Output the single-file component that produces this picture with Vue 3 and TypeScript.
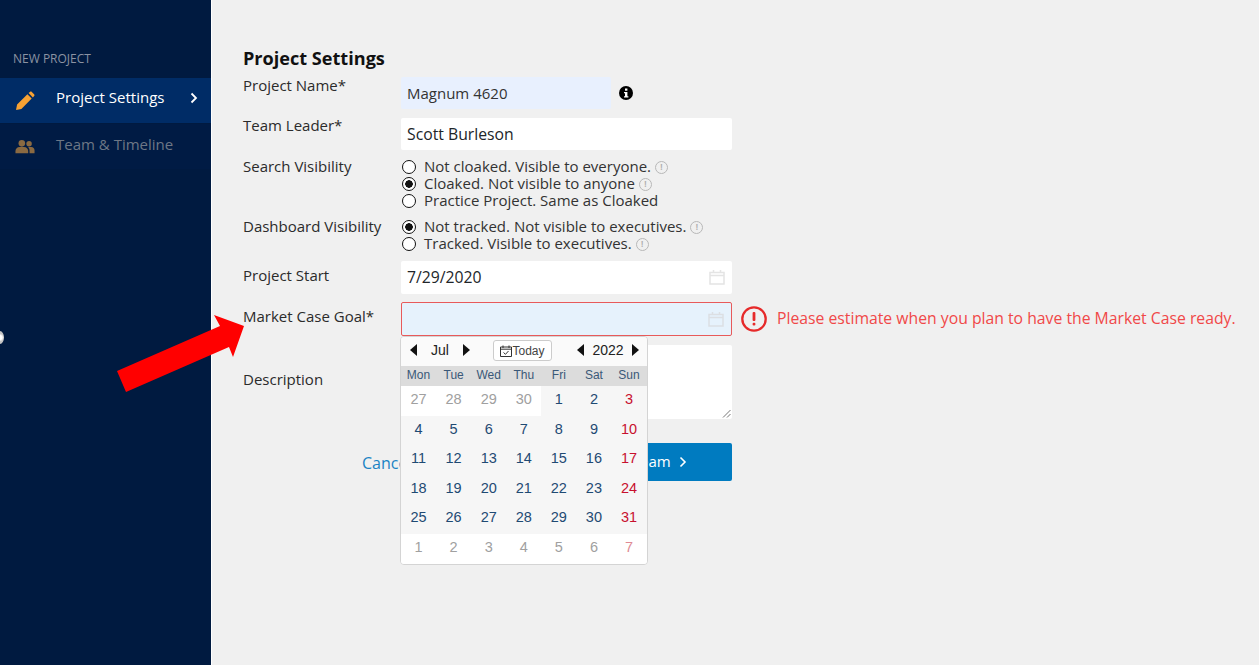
<script setup lang="ts">
const header = ['Mon', 'Tue', 'Wed', 'Thu', 'Fri', 'Sat', 'Sun']
interface Day { n: number; off: boolean }
const days: Day[] = []
for (const n of [27, 28, 29, 30]) days.push({ n, off: true })
for (let n = 1; n <= 31; n++) days.push({ n, off: false })
for (let n = 1; n <= 7; n++) days.push({ n, off: true })
const weeks: Day[][] = []
for (let i = 0; i < days.length; i += 7) weeks.push(days.slice(i, i + 7))
</script>

<template>
  <div class="page">
    <aside class="side">
      <div class="side-title">NEW PROJECT</div>
      <div class="nav active">
        <svg class="nav-ic" viewBox="0 0 20 20" width="20" height="20"><path fill="#f7a233" d="M1 19l1.100-5.400L12.400 3.300l4.300 4.300L6.400 17.900zM13.600 2.100l1.300-1.200c.6-.5 1.400-.5 1.900 0l2.300 2.300c.5.5.5 1.300 0 1.900l-1.200 1.300z"/></svg>
        <span class="nav-text">Project Settings</span>
        <svg class="nav-chev" viewBox="0 0 8 12" width="8" height="12"><path d="M1.500 1.500L6 6l-4.500 4.500" fill="none" stroke="#fff" stroke-width="1.800"/></svg>
      </div>
      <div class="nav second">
        <svg class="nav-ic" viewBox="0 0 22 16" width="22" height="16"><g fill="#8a6a42"><circle cx="7.500" cy="4" r="3.600"/><circle cx="15.500" cy="4.500" r="3"/><path d="M0.500 15v-2.500c0-2.500 2-4.500 4.500-4.500h5c2.500 0 4.500 2 4.500 4.500V15z"/><path d="M16 15v-3c0-1.500-.5-2.700-1.500-3.600.4-.2.900-.4 1.500-.4h2c2 0 3.500 1.500 3.500 3.500V15z"/></g></svg>
        <span class="nav-text dim">Team &amp; Timeline</span>
      </div>
    </aside>
    <main class="main">
      <h1 class="title">Project Settings</h1>
      <div class="row name-row">
        <label class="lab">Project Name*</label>
        <div class="input auto">Magnum 4620</div>
        <svg class="info" viewBox="0 0 14 14" width="14" height="14"><circle cx="7" cy="7" r="7" fill="#000"/><rect x="6" y="2.500" width="2.400" height="2.200" fill="#fff"/><path d="M5 6h3.400v4.300h1V11.600H5v-1.300h1V7.300H5z" fill="#fff"/></svg>
      </div>
      <div class="row leader-row">
        <label class="lab">Team Leader*</label>
        <div class="input wide">Scott Burleson</div>
      </div>
      <div class="row search-row">
        <label class="lab">Search Visibility</label>
        <div class="radios">
          <div class="radio"><i class="dot"></i><span>Not cloaked. Visible to everyone.</span><i class="hint">!</i></div>
          <div class="radio"><i class="dot on"></i><span>Cloaked. Not visible to anyone</span><i class="hint">!</i></div>
          <div class="radio"><i class="dot"></i><span>Practice Project. Same as Cloaked</span></div>
        </div>
      </div>
      <div class="row dash-row">
        <label class="lab">Dashboard Visibility</label>
        <div class="radios">
          <div class="radio"><i class="dot on"></i><span>Not tracked. Not visible to executives.</span><i class="hint">!</i></div>
          <div class="radio"><i class="dot"></i><span>Tracked. Visible to executives.</span><i class="hint">!</i></div>
        </div>
      </div>
      <div class="row start-row">
        <label class="lab">Project Start</label>
        <div class="input wide date">7/29/2020
          <svg class="cal" viewBox="0 0 16 16" width="16" height="16"><path fill="none" stroke="#e4e4e4" stroke-width="1.500" d="M1 3.500h14v11.500H1zM1 6.500h14M4.500 1v3M11.500 1v3"/></svg>
        </div>
      </div>
      <div class="row market-row">
        <label class="lab">Market Case Goal*</label>
        <div class="input wide date err">
          <svg class="cal" viewBox="0 0 16 16" width="16" height="16"><path fill="none" stroke="#dcdfe3" stroke-width="1.500" d="M1 3.500h14v11.500H1zM1 6.500h14M4.500 1v3M11.500 1v3"/></svg>
        </div>
        <svg class="err-ic" viewBox="0 0 26 26" width="26" height="26"><circle cx="13" cy="13" r="11.700" fill="none" stroke="#e62a2a" stroke-width="2.300"/><rect x="11.600" y="6" width="2.800" height="9" rx="1" fill="#e62a2a"/><rect x="11.600" y="16.800" width="2.800" height="2.800" rx="1" fill="#e62a2a"/></svg>
        <span class="err-text">Please estimate when you plan to have the Market Case ready.</span>
      </div>
      <div class="row desc-row">
        <label class="lab">Description</label>
        <div class="area">
          <svg class="grip" viewBox="0 0 9 9" width="9" height="9"><path d="M8.500 1L1 8.500M8.500 5L5 8.500" stroke="#777" stroke-width="1" fill="none"/></svg>
        </div>
      </div>
      <div class="actions">
        <a class="cancel">Cancel</a>
        <div class="next"><span class="next-label">Next: Team</span>
          <svg viewBox="0 0 8 12" width="8" height="12"><path d="M1.500 1.500L6 6l-4.500 4.500" fill="none" stroke="#fff" stroke-width="1.600"/></svg>
        </div>
      </div>

      <div class="picker">
        <div class="p-head">
          <div class="p-nav">
            <i class="tri left"></i><span class="month">Jul</span><i class="tri right"></i>
          </div>
          <div class="today">
            <svg viewBox="0 0 12 12" width="12" height="12"><path fill="none" stroke="#333" stroke-width="1" d="M.5 2h11v9.500H.5zM.5 4.200h11M3 .5v2.500M9 .5v2.500M3.500 7.500l2 1.800L8.500 6"/></svg>Today
          </div>
          <div class="p-nav year">
            <i class="tri left"></i><span class="yr">2022</span><i class="tri right"></i>
          </div>
        </div>
        <div class="p-week">
          <span v-for="h in header" :key="h">{{ h }}</span>
        </div>
        <div class="p-body">
          <div v-for="(w, i) in weeks" :key="i" class="p-row">
            <span
              v-for="(d, j) in w"
              :key="j"
              class="p-day"
              :class="{ off: d.off, sun: j === 6 }"
            >{{ d.n }}</span>
          </div>
        </div>
      </div>
    </main>
    <svg class="arrow" viewBox="0 0 130 80" width="130" height="80"><path fill="#ff0000" d="M2 56L11 77L114 32L118 42L129 11L99 0L105 11z"/></svg>
    <i class="knob"></i>
  </div>
</template>

<style>
html, body { margin: 0; background: #f0f0f0; }
</style>

<style scoped>
.page {
  position: relative;
  display: flex;
  width: 1259px;
  height: 665px;
  overflow: hidden;
  font-family: "Open Sans", sans-serif;
  color: #212529;
  background: #f0f0f0;
}
.side {
  width: 211px;
  flex: none;
  background: #001a40;
  border-right: 1px solid #fff;
  padding-top: 51px;
}
.side-title {
  font-size: 12px;
  line-height: 16px;
  color: #8b93a2;
  padding-left: 13px;
  margin-bottom: 11px;
}
.nav {
  box-sizing: border-box;
  height: 45px;
  padding: 0 0 7px 15px;
  display: flex;
  align-items: center;
  position: relative;
  font-size: 15px;
}
.active { background: #002c66; color: #fff; }
.second { background: #001b44; margin-top: 1px; padding-bottom: 6px; }
.nav-ic { width: 20px; flex: none; margin-top: 8px; }
.second .nav-ic { margin-top: 6px; }
.nav-text { margin-left: 21px; }
.dim { color: #6d7786; }
.nav-chev { position: absolute; left: 190px; top: 14px; }

.main { flex: 1; position: relative; padding: 47px 0 0 31px; }
.title { margin: 0; font-size: 18.100px; line-height: 23px; font-weight: 700; color: #111; }
.row { display: flex; align-items: flex-start; }
.lab { width: 158px; flex: none; font-size: 15px; line-height: 20px; color: #2b2b2b; }
.input {
  box-sizing: border-box;
  height: 32px;
  background: #fff;
  border-radius: 2px;
  font-size: 15.750px;
  line-height: 32px;
  padding-left: 6px;
  color: #212529;
  position: relative;
}
.name-row { margin-top: 7px; height: 32px; }
.name-row .lab { margin-top: -2px; }
.auto { width: 210px; background: #e8f0fe; font-size: 15px; color: #333; }
.info { margin: 9px 0 0 8px; }
.wide { width: 331px; }
.leader-row { margin-top: 9px; height: 32px; }
.leader-row .lab { margin-top: -3px; }
.search-row { margin-top: 9px; height: 51px; }
.search-row .lab { margin-top: -3px; }
.dash-row { margin-top: 9px; height: 34px; }
.dash-row .lab { margin-top: -3px; }
.radios { margin-top: -2px; display: flex; flex-direction: column; }
.start-row { margin-top: 8px; height: 33px; }
.start-row .input { height: 33px; line-height: 33px; }
.start-row .lab { margin-top: 4px; }
.market-row { margin-top: 8px; height: 34px; }
.market-row .lab { margin-top: 4px; }
.err { height: 34px; background: #e6f2fc; border: 1px solid #e85a5a; }
.cal { position: absolute; right: 7px; top: 8px; }
.err-ic { margin: 4px 0 0 9px; }
.err-text { font-size: 15.750px; line-height: 32px; color: #f04848; margin-left: 10px; white-space: nowrap; }
.desc-row { margin-top: 9px; height: 74px; }
.desc-row .lab { margin-top: 24px; }
.area { width: 331px; height: 74px; background: #fff; border-radius: 2px; position: relative; }
.grip { position: absolute; right: 1px; bottom: 1px; }
.radio { display: flex; align-items: center; height: 17px; font-size: 15px; color: #333; white-space: nowrap; }
.dot {
  box-sizing: border-box;
  width: 14px;
  height: 14px;
  border: 1.600px solid #111;
  border-radius: 50%;
  margin: 2px 8px 0 1px;
  background: #fff;
  flex: none;
}
.dot.on { background: radial-gradient(circle, #111 0 3.500px, #fff 4px); }
.hint {
  box-sizing: border-box;
  width: 13px;
  height: 13px;
  border: 1.500px solid #b8b8b8;
  border-radius: 50%;
  margin: 3px 0 0 4px;
  font: normal 700 8px/10px "Open Sans", sans-serif;
  text-align: center;
  color: #b0b0b0;
}
.actions { display: flex; align-items: center; margin-top: 24px; margin-left: 119px; width: 370px; height: 38px; }
.cancel { font-size: 16px; color: #1a83c4; margin-top: 2px; }
.next {
  margin-left: auto;
  width: 144px;
  height: 38px;
  box-sizing: border-box;
  background: #007bc0;
  color: #fff;
  border-radius: 2px;
  font-size: 15px;
  line-height: 37px;
  padding-left: 3px;
  white-space: nowrap;
}
.next svg { margin-left: 8px; vertical-align: -1px; }

.picker {
  position: absolute;
  left: 188px;
  top: 336px;
  width: 248px;
  height: 229px;
  box-sizing: border-box;
  background: #f6f6f6;
  border: 1px solid #d4d4d4;
  border-radius: 4px;
  font-family: "Liberation Sans", sans-serif;
  overflow: hidden;
}
.p-head { box-sizing: border-box; height: 29px; padding-bottom: 3px; background: #fafafa; display: flex; align-items: center; position: relative; }
.p-nav { display: flex; align-items: center; margin-left: 9px; font-size: 14px; color: #222; }
.month { width: 46px; text-align: center; }
.year { position: absolute; right: 8px; top: 5px; margin: 0; }
.yr { width: 48px; text-align: center; }
.tri { width: 0; height: 0; border-top: 6px solid transparent; border-bottom: 6px solid transparent; }
.tri.left { border-right: 7px solid #111; }
.tri.right { border-left: 7px solid #111; }
.today {
  position: absolute;
  left: 92px;
  top: 3px;
  width: 59px;
  height: 21px;
  box-sizing: border-box;
  background: #fff;
  border: 1px solid #ccc;
  border-radius: 3px;
  display: flex;
  align-items: center;
  justify-content: center;
  font-size: 12px;
  color: #444;
}
.p-week { height: 20px; background: #dcdcdc; display: grid; grid-template-columns: repeat(7, 35.080px); font-size: 12px; line-height: 19px; text-align: center; color: #3a5878; }
.p-body { display: flex; flex-direction: column; }
.p-row { display: grid; grid-template-columns: repeat(7, 35.080px); height: 29.600px; }
.p-day { text-align: center; font-size: 14.500px; line-height: 26px; color: #1f4a73; }
.p-day.sun { color: #c8102e; }
.p-day.off { background: #fff; color: #a0a0a0; }
.p-day.off.sun { color: #e08a94; }

.arrow { position: absolute; left: 115px; top: 315px; }
.knob {
  position: absolute;
  left: -4px;
  top: 331px;
  width: 8px;
  height: 13px;
  border-radius: 50%;
  background: radial-gradient(circle, #fff 0 2px, #c4c4c4 4px);
}
</style>
